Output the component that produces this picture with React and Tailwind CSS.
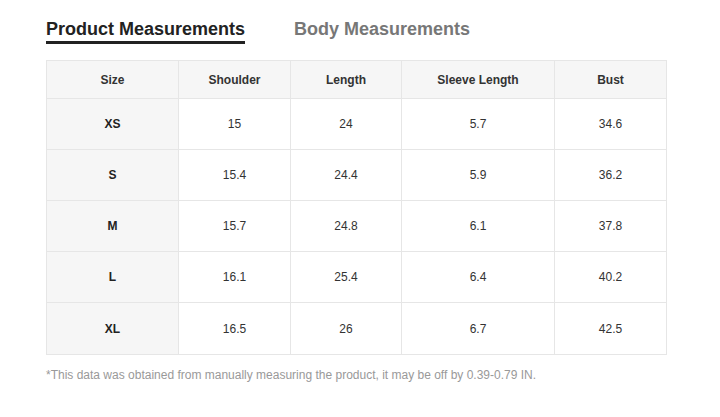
export default function App() {
  const cols = ["Size", "Shoulder", "Length", "Sleeve Length", "Bust"];
  const widths = ["w-[132px]", "w-[112px]", "w-[111px]", "w-[153px]", "w-[112px]"];
  const rows = [
    ["XS", "15", "24", "5.7", "34.6"],
    ["S", "15.4", "24.4", "5.9", "36.2"],
    ["M", "15.7", "24.8", "6.1", "37.8"],
    ["L", "16.1", "25.4", "6.4", "40.2"],
    ["XL", "16.5", "26", "6.7", "42.5"],
  ];
  return (
    <div className="w-[720px] h-[417px] bg-white font-['Liberation_Sans',Arial,sans-serif] pl-[46px] pt-[19px]">
      <div className="flex items-start gap-[49px] h-[41px]">
        <div className="text-[18px] font-bold text-[#222] leading-[20px] border-b-[3px] border-[#222] pb-[2px]">
          Product Measurements
        </div>
        <div className="text-[18px] font-bold text-[#777] leading-[20px]">Body Measurements</div>
      </div>
      <table className="border-collapse w-[621px] table-fixed text-[12px]">
        <thead>
          <tr className="h-[38px] bg-[#f6f6f6]">
            {cols.map((c, i) => (
              <th key={c} className={`${widths[i]} border border-[#e6e6e6] font-bold text-[#333] text-center`}>
                {c}
              </th>
            ))}
          </tr>
        </thead>
        <tbody>
          {rows.map((r, ri) => (
            <tr key={r[0]} className={ri === 4 ? "h-[52px]" : "h-[51px]"}>
              {r.map((v, i) => (
                <td
                  key={i}
                  className={
                    i === 0
                      ? "border border-[#e6e6e6] bg-[#f6f6f6] font-bold text-[#222] text-center"
                      : "border border-[#e6e6e6] text-[#333] text-center"
                  }
                >
                  {v}
                </td>
              ))}
            </tr>
          ))}
        </tbody>
      </table>
      <div className="mt-[11px] text-[12px] text-[#999]">
        *This data was obtained from manually measuring the product, it may be off by 0.39-0.79 IN.
      </div>
    </div>
  );
}
